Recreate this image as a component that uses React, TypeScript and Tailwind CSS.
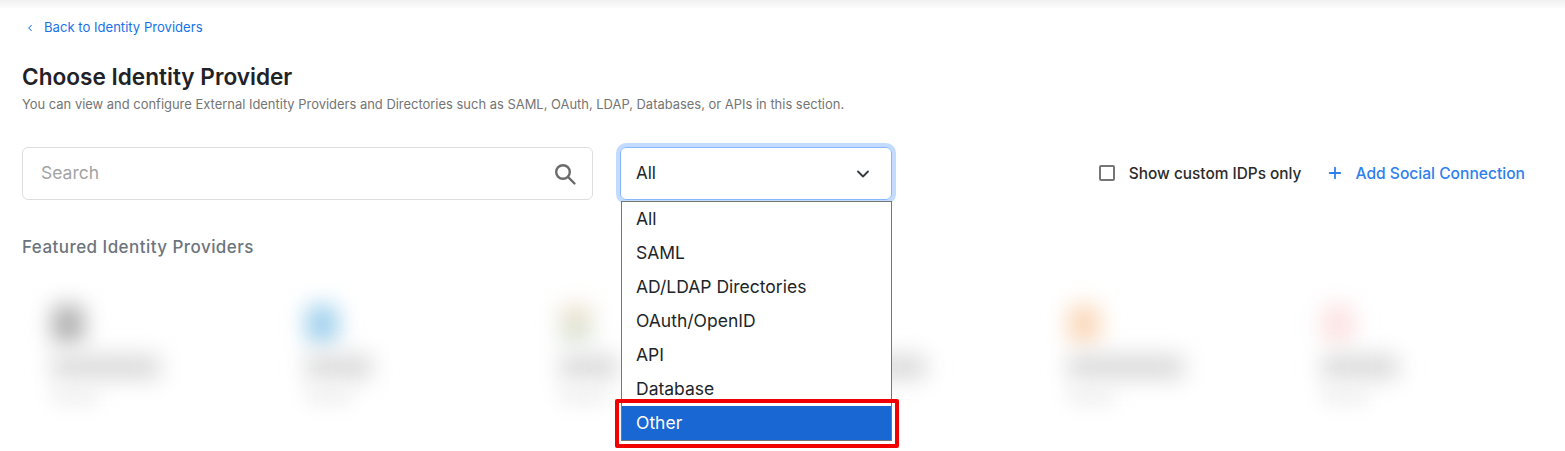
import { ChevronDown, ChevronLeft, Plus } from "lucide-react";

const options = ["All", "SAML", "AD/LDAP Directories", "OAuth/OpenID", "API", "Database"];

const cards = [
  { logo: "bg-[#b0b0b0]", title: "w-[108px]" },
  { logo: "bg-[#9fd0ec]", title: "w-[66px]" },
  { logo: "bg-gradient-to-b from-[#f4e0cc] to-[#cfe4d6]", title: "w-[58px]" },
  { logo: "bg-white", title: "w-[112px]" },
  { logo: "bg-[#fad8ba]", title: "w-[116px]" },
  { logo: "bg-[#fce2e2]", title: "w-[76px]" },
];

function BlurCard({ logo, title }: { logo: string; title: string }) {
  return (
    <div className="flex flex-col items-start pl-[30px] pt-[17px] h-[144px]">
      <div className={`h-[38px] w-[32px] rounded-md blur-[11px] ${logo}`} />
      <div className={`mt-[12px] h-[24px] bg-[#dadada] blur-[11px] ${title}`} />
      <div className="mt-[8px] h-[16px] w-[46px] bg-[#eeeeee] blur-[10px]" />
    </div>
  );
}

export default function App() {
  return (
    <div className="relative h-[451px] w-[1565px] overflow-hidden bg-white text-[#212529] font-['Inter',sans-serif]">
      <div className="h-[8px] bg-gradient-to-b from-[#f1f1f1] to-[#fbfbfb]" />
      <div className="px-[22px]">
        <a className="mt-[12px] flex h-[16px] items-center text-[13.1px] text-[#1a73e8]">
          <ChevronLeft className="ml-[3px] mr-[9px] h-[10px] w-[10px]" strokeWidth={2.5} />
          Back to Identity Providers
        </a>
        <h1 className="mt-[26px] text-[22.6px] font-semibold leading-[30px] text-[#1f2226]">Choose Identity Provider</h1>
        <p className="mt-[3px] text-[12.95px] leading-[18px] text-[#757575]">
          You can view and configure External Identity Providers and Directories such as SAML, OAuth, LDAP, Databases, or APIs in this section.
        </p>

        <div className="mt-[34px] flex h-[53px] items-center">
          <div className="flex h-[53px] w-[571px] items-center rounded-md border border-[#dedede] pl-[18px] pr-[15px]">
            <input
              placeholder="Search"
              className="min-w-0 flex-1 bg-transparent text-[17.5px] outline-none placeholder:text-[#a3a3a3]"
            />
            <svg viewBox="0 0 24 24" fill="none" stroke="#6b6b6b" strokeWidth="2.4" strokeLinecap="round" className="h-[24px] w-[24px]">
              <circle cx="10" cy="10" r="6.8" />
              <path d="M15.2 15.2 21.5 21.5" />
            </svg>
          </div>
          <div className="relative ml-[27px] w-[272px]">
            <div className="flex h-[53px] items-center justify-between rounded-md border border-[#86b7fe] pb-[0px] pt-[1px] pl-[15px] pr-[18px] shadow-[0_0_0_4px_#c2dbfe] text-[17px]">
              All
              <ChevronDown className="h-[20px] w-[20px] text-[#343a40]" strokeWidth={2.2} />
            </div>
          </div>
          <label className="ml-auto flex items-center text-[15.4px] font-medium text-[#2b2b2b]">
            <span className="mr-[14px] h-[16px] w-[16px] rounded-[2px] border-2 border-[#767676]" />
            Show custom IDPs only
          </label>
          <a className="ml-[25px] mr-[18px] flex items-center text-[15.6px] font-medium text-[#2f80ed]">
            <Plus className="mr-[11px] h-[18px] w-[18px]" strokeWidth={2.4} />
            Add Social Connection
          </a>
        </div>

        <h2 className="mt-[35px] text-[17px] font-medium leading-[24px] tracking-[0.45px] text-[#6c757d]">Featured Identity Providers</h2>

        <div className="mt-[28px] grid w-[1524px] grid-cols-6 border-t border-t-transparent">
          {cards.map((card, index) => (
            <BlurCard key={index} logo={card.logo} title={card.title} />
          ))}
        </div>
      </div>

      <div className="absolute left-[621px] top-[201px] w-[271px] border border-[#767676] bg-white text-[17.5px] text-[#212529]">
        {options.map((option) => (
          <div key={option} className="flex h-[34px] items-center pl-[14px]">
            {option}
          </div>
        ))}
        <div className="flex h-[34px] items-center bg-[#1967d2] pl-[14px] text-white">Other</div>
      </div>
      <div className="absolute left-[615px] top-[399px] h-[49px] w-[284px] rounded-[2px] border-[4px] border-[#f00000]" />
    </div>
  );
}
